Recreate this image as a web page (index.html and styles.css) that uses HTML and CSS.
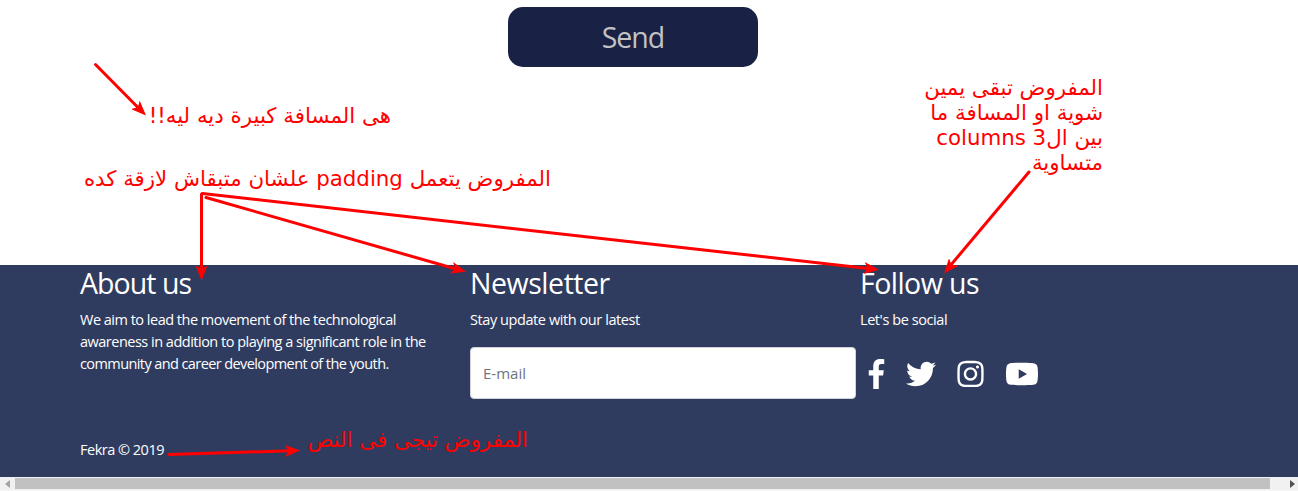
FILE: index.html
```html
<!DOCTYPE html>
<html lang="en">
<head>
<meta charset="utf-8">
<title>Fekra</title>
<link rel="stylesheet" href="styles.css">
</head>
<body>
<div class="page">
  <main class="contact">
    <button class="send" type="button"><span class="send-label">Send</span></button>
  </main>
  <footer class="footer">
    <div class="columns">
      <section class="column">
        <h2 class="title title-about">About us</h2>
        <p class="text"><span class="line-a">We aim to lead the movement of the technological</span><br><span class="line-b">awareness in addition to playing a significant role in the</span><br><span class="line-c">community and career development of the youth.</span></p>
      </section>
      <section class="column">
        <h2 class="title title-news">Newsletter</h2>
        <p class="text text-news">Stay update with our latest</p>
        <input class="email" type="email" placeholder="E-mail">
      </section>
      <section class="column">
        <h2 class="title title-follow">Follow us</h2>
        <p class="text text-social">Let's be social</p>
        <div class="social">
          <svg class="facebook" viewBox="0 0 264 512"><path d="M215.8 85H264V3.6C255.7 2.5 227.1 0 193.8 0 124.3 0 76.7 42.4 76.7 120.3V192H0v91h76.7v229h94V283h73.6l11.7-91h-85.3v-62.7c0-26.3 7.3-44.3 45.1-44.3z"/></svg>
          <svg class="twitter" viewBox="0 0 512 512"><path d="M459.37 151.716c.325 4.548.325 9.097.325 13.645 0 138.72-105.583 298.558-298.558 298.558-59.452 0-114.68-17.219-161.137-47.106 8.447.974 16.568 1.299 25.34 1.299 49.055 0 94.213-16.568 130.274-44.832-46.132-.975-84.792-31.188-98.112-72.772 6.498.974 12.995 1.624 19.818 1.624 9.421 0 18.843-1.3 27.614-3.573-48.081-9.747-84.143-51.98-84.143-102.985v-1.299c13.969 7.797 30.214 12.67 47.431 13.319-28.264-18.843-46.781-51.005-46.781-87.391 0-19.492 5.197-37.36 14.294-52.954 51.655 63.675 129.3 105.258 216.365 109.807-1.624-7.797-2.599-15.918-2.599-24.04 0-57.828 46.782-104.934 104.934-104.934 30.213 0 57.502 12.67 76.67 33.137 23.715-4.548 46.456-13.32 66.599-25.34-7.798 24.366-24.366 44.833-46.132 57.827 21.117-2.273 41.584-8.122 60.426-16.243-14.292 20.791-32.161 39.308-52.628 54.253z"/></svg>
          <svg class="instagram" viewBox="0 0 448 512"><path d="M224.1 141c-63.6 0-114.9 51.3-114.9 114.9s51.3 114.9 114.9 114.9S339 319.5 339 255.9 287.7 141 224.1 141zm0 189.6c-41.1 0-74.7-33.5-74.7-74.7s33.5-74.7 74.7-74.7 74.7 33.5 74.7 74.7-33.6 74.7-74.7 74.7zm146.4-194.3c0 14.9-12 26.8-26.8 26.8-14.9 0-26.8-12-26.8-26.8s12-26.8 26.8-26.8 26.8 12 26.8 26.8zm76.1 27.2c-1.7-35.9-9.9-67.7-36.2-93.9-26.2-26.2-58-34.4-93.9-36.2-37-2.1-147.9-2.1-184.9 0-35.8 1.7-67.6 9.9-93.9 36.1s-34.4 58-36.2 93.9c-2.1 37-2.1 147.9 0 184.9 1.7 35.9 9.9 67.7 36.2 93.9s58 34.4 93.9 36.2c37 2.1 147.9 2.1 184.9 0 35.9-1.7 67.7-9.9 93.9-36.2 26.2-26.2 34.4-58 36.2-93.9 2.1-37 2.1-147.8 0-184.8zM398.8 388c-7.8 19.6-22.9 34.7-42.6 42.6-29.5 11.7-99.5 9-132.1 9s-102.7 2.6-132.1-9c-19.6-7.8-34.7-22.9-42.6-42.6-11.7-29.5-9-99.5-9-132.1s-2.6-102.7 9-132.1c7.8-19.6 22.9-34.7 42.6-42.6 29.5-11.7 99.5-9 132.1-9s102.7-2.6 132.1 9c19.6 7.8 34.7 22.9 42.6 42.6 11.7 29.5 9 99.5 9 132.1s2.7 102.7-9 132.1z"/></svg>
          <svg class="youtube" viewBox="0 0 576 512"><path d="M549.655 124.083c-6.281-23.65-24.787-42.276-48.284-48.597C458.781 64 288 64 288 64S117.22 64 74.629 75.486c-23.497 6.322-42.003 24.947-48.284 48.597-11.412 42.867-11.412 132.305-11.412 132.305s0 89.438 11.412 132.305c6.281 23.65 24.787 41.5 48.284 47.821C117.22 448 288 448 288 448s170.78 0 213.371-11.486c23.497-6.321 42.003-24.171 48.284-47.821 11.412-42.867 11.412-132.305 11.412-132.305s0-89.438-11.412-132.305zm-317.51 213.508V175.185l142.739 81.205-142.739 81.201z"/></svg>
        </div>
      </section>
    </div>
    <p class="text copyright">Fekra © 2019</p>
  </footer>
  <div class="scrollbar">
    <svg class="arrow arrow-left" viewBox="0 0 5 8"><path d="M5 0v8L0 4z"/></svg>
    <div class="thumb"></div>
    <svg class="arrow arrow-right" viewBox="0 0 5 8"><path d="M0 0v8l5-4z"/></svg>
  </div>

  <svg class="arrows" viewBox="0 0 1298 491">
    <defs>
      <marker id="head" viewBox="0 0 15 12" refX="15" refY="6" markerWidth="15" markerHeight="12" markerUnits="userSpaceOnUse" orient="auto"><path d="M0 0L15 6 0 12 3.5 6z"/></marker>
    </defs>
    <path class="shaft" d="M95.500 64.500L137.500 107"/><path class="tip" d="M95.500 64.500L146 115.500"/>
    <path class="shaft" d="M201.500 194V270"/><path class="tip" d="M201.500 194V280.500"/>
    <path class="shaft" d="M206 197.500L456 269"/><path class="tip" d="M206 197.500L466 271.800"/>
    <path class="shaft" d="M202.500 193.500L868 268.500"/><path class="tip" d="M202.500 193.500L879 269.700"/>
    <path class="shaft" d="M1029 172L950 266"/><path class="tip" d="M1029 172L944 273.500"/>
    <path class="shaft" d="M169 454.500L290 450.800"/><path class="tip" d="M169 454.500L300 450.500"/>
  </svg>
  <p class="note note-gap" dir="rtl">هى المسافة كبيرة ديه ليه!!</p>
  <p class="note note-padding" dir="rtl">المفروض يتعمل padding علشان متبقاش لازقة كده</p>
  <p class="note note-columns" dir="rtl">المفروض تبقى يمين<br>شوية او المسافة ما<br>بين ال3 columns<br>متساوية</p>
  <p class="note note-center" dir="rtl">المفروض تيجى فى النص</p>
</div>
</body>
</html>
```
FILE: styles.css
```css
* { box-sizing: border-box; }
body { margin: 0; background: #fff; overflow: hidden; }
p, h2 { margin: 0; font-weight: 400; }
.page {
  position: relative;
  width: 1298px;
  height: 491px;
  display: flex;
  flex-direction: column;
  font-family: "Open Sans", "Noto Sans", sans-serif;
}
.contact { height: 265px; padding: 7px 0 0 508px; }
.send {
  display: block;
  width: 250px;
  height: 60px;
  padding: 0;
  border: 0;
  border-radius: 15px;
  background: #192245;
  color: #c4c2c4;
  font: 400 28.500px/60px "Open Sans", sans-serif;
}
.send-label { letter-spacing: -1px; }
.footer {
  height: 212px;
  padding-left: 80px;
  background: #303c5f;
  color: #fff;
}
.columns { display: grid; grid-template-columns: 390px 390px 390px; height: 174px; }
.title { height: 44px; font-size: 28.500px; line-height: 36px; white-space: nowrap; font-weight: 400; }
.title-about { letter-spacing: -0.95px; }
.title-news { letter-spacing: -0.45px; }
.title-follow { letter-spacing: -0.55px; }
.text { font-size: 14.500px; line-height: 22px; white-space: nowrap; letter-spacing: -0.5px; }
.line-c { letter-spacing: -0.59px; }
.text-news { letter-spacing: -0.42px; }
.text-social { letter-spacing: -0.42px; }
.email {
  display: block;
  width: 386px;
  height: 52px;
  margin-top: 16px;
  padding: 0 12px 1px;
  border: 1px solid #ced4da;
  border-radius: 4px;
  background: #fff;
  font: 400 15px "Open Sans", sans-serif;
  letter-spacing: 0;
}
.email::placeholder { color: #6c757d; opacity: 1; }
.social { display: flex; align-items: center; height: 30px; margin-top: 28px; padding-left: 8px; }
.social svg { fill: #fff; flex: none; }
.facebook { width: 17px; height: 30px; }
.twitter { width: 30px; height: 30px; margin-left: 20.500px; }
.instagram { width: 27px; height: 30px; margin-left: 21px; }
.youtube { width: 34px; height: 30px; margin-left: 21px; }
.scrollbar { display: flex; align-items: center; height: 14px; background: #f1f1f1; border-bottom: 1px solid #f5f5f5; }
.arrow { width: 5px; height: 8px; }
.arrow-left { margin: 0 5px; fill: #a3a3a3; }
.arrow-right { margin-left: 20px; fill: #505050; }
.thumb { width: 1255px; height: 11px; background: #c1c1c1; }

/* Review notes laid over the page */
.arrows { position: absolute; left: 0; top: 0; width: 1298px; height: 491px; }
.arrows marker path { fill: #f00; }
.shaft { fill: none; stroke: #f00; stroke-width: 3; stroke-linecap: round; }
.tip { fill: none; marker-end: url(#head); }
.note {
  position: absolute;
  color: #f00;
  font: 21.330px/25px "DejaVu Sans", sans-serif;
  white-space: nowrap;
}
.note-gap { right: 907px; top: 103px; }
.note-padding { right: 747px; top: 166px; }
.note-columns { right: 195px; top: 75px; }
.note-center { right: 770px; top: 427px; }
```
